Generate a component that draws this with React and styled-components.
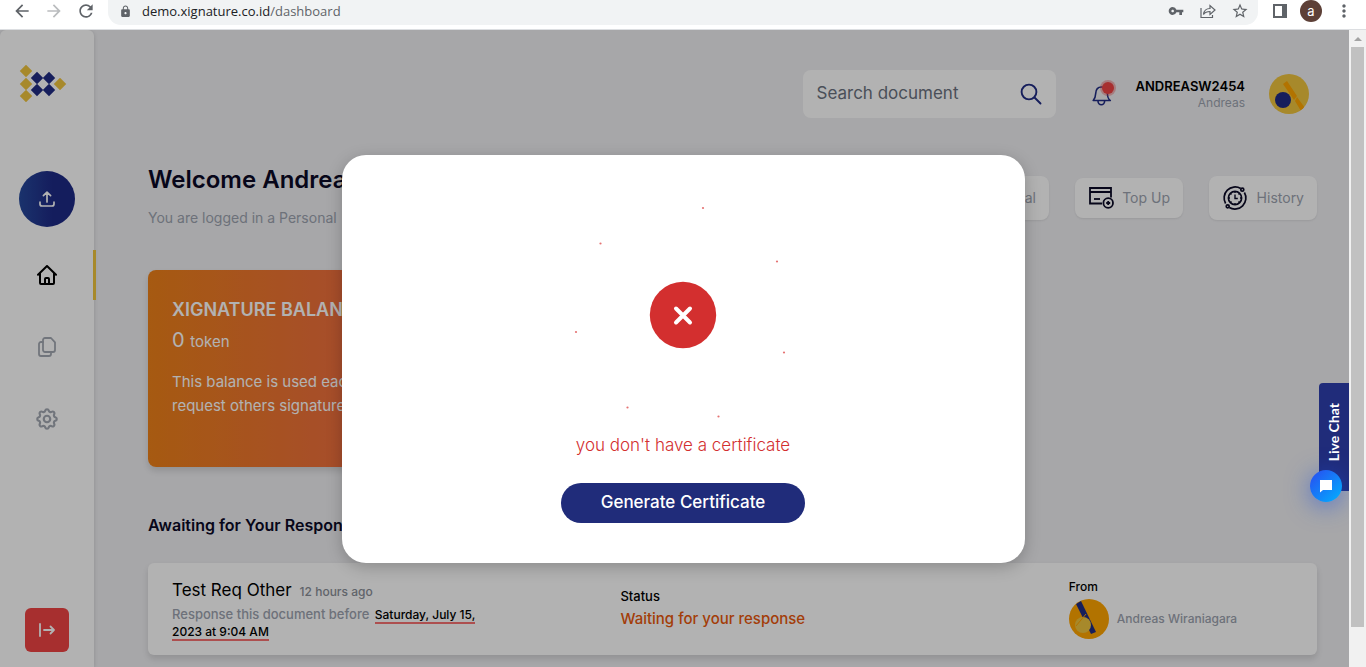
import React from 'react'

import styled, { createGlobalStyle, css } from 'styled-components'
import { MdArrowBack, MdArrowForward, MdRefresh, MdLock, MdVpnKey, MdStarBorder, MdMoreVert, MdPersonOutline } from 'react-icons/md'
import { HiOutlineCog } from 'react-icons/hi'

const GlobalStyle = createGlobalStyle`
    * {
        box-sizing: border-box;
    }
    body {
        margin: 0;
        overflow: hidden;
        font-family: Inter, "Liberation Sans", sans-serif;
        color: #0b0a26;
    }
    button {
        font-family: inherit;
        border: none;
        padding: 0;
        background: none;
        cursor: pointer;
    }
    h1, h2, h3, p {
        margin: 0;
    }
    svg {
        display: block;
    }
`;

const Window = styled.div`
    position: relative;
    height: 100vh;
    display: flex;
    flex-direction: column;
`;

/* browser bar */

const Browser = styled.div`
    height: 30px;
    flex: none;
    display: flex;
    align-items: flex-start;
    padding-left: 12px;
    background-color: #fff;
    border-bottom: 1px solid #dcdee1;
    color: #5f6368;
`;

const NavButton = styled.button`
    width: 32px;
    height: 22px;
    display: flex;
    align-items: center;
    color: ${props => props.$off ? '#babcbe' : '#5f6368'};
`;

const Address = styled.div`
    flex: 1;
    height: 25px;
    display: flex;
    align-items: center;
    gap: 10px;
    padding: 0 7px 3px 11px;
    background-color: #f1f3f4;
    border-radius: 0 0 13px 13px;
`;

const Url = styled.div`
    flex: 1;
    font-family: "Open Sans", "Noto Sans", sans-serif;
    font-size: 13px;
    line-height: 20px;
    color: #202124;
    span {
        color: #5f6368;
    }
`;

const AddressButton = styled.button`
    width: 22px;
    display: flex;
    justify-content: center;
    color: #5f6368;
`;

const BrowserTools = styled.div`
    height: 22px;
    display: flex;
    align-items: center;
    gap: 12px;
    padding: 0 12px 0 14px;
`;

const Profile = styled.button`
    width: 22px;
    height: 22px;
    border-radius: 50%;
    background-color: #5d4037;
    color: #fff;
    font-size: 13px;
    line-height: 20px;
`;

/* page */

const Viewport = styled.div`
    flex: 1;
    min-height: 0;
    display: flex;
`;

const Page = styled.div`
    position: relative;
    flex: 1;
    min-width: 0;
    display: flex;
    overflow: hidden;
    background-color: #efeff2;
`;

const Sidebar = styled.nav`
    width: 94px;
    flex: none;
    display: flex;
    flex-direction: column;
    align-items: center;
    padding: 35px 0 15px;
    background-color: #fff;
    border-radius: 6px 6px 0 0;
    box-shadow: 0 1px 4px rgba(0,0,0,.15);
`;

const Upload = styled.button`
    width: 56px;
    height: 56px;
    margin: 69px 0 23px;
    display: flex;
    align-items: center;
    justify-content: center;
    border-radius: 50%;
    background: linear-gradient(90deg, #26499c, #1e2a86 60%);
    color: #fff;
`;

const Menu = styled.div`
    width: 100%;
    display: flex;
    flex-direction: column;
    gap: 22px;
`;

const MenuItem = styled.a`
    height: 50px;
    display: flex;
    align-items: center;
    justify-content: center;
    color: ${props => props.$active ? '#000' : '#a3a8b2'};
    ${props => props.$active && css`
        position: relative;
        &::after {
            content: '';
            position: absolute;
            top: 0;
            right: -2px;
            width: 3px;
            height: 100%;
            background-color: #f0c43e;
        }
    `}
`;

const Logout = styled.button`
    width: 44px;
    height: 44px;
    margin-top: auto;
    display: flex;
    align-items: center;
    justify-content: center;
    border-radius: 6px;
    background-color: #ef4444;
    color: #fff;
`;

const Main = styled.main`
    flex: 1;
    min-width: 0;
    padding: 40px 32px 0 54px;
`;

const Header = styled.header`
    display: flex;
    justify-content: flex-end;
    align-items: center;
    padding-right: 8px;
`;

const Search = styled.label`
    width: 253px;
    height: 48px;
    display: flex;
    align-items: center;
    padding: 0 14px;
    background-color: #fff;
    border-radius: 8px;
`;

const SearchInput = styled.input`
    flex: 1;
    min-width: 0;
    border: none;
    outline: none;
    padding: 0 0 2px;
    background: transparent;
    font-family: inherit;
    font-size: 17px;
    line-height: 24px;
    &::placeholder {
        color: #6b7280;
        opacity: 1;
    }
`;

const Bell = styled.button`
    margin: 0 18px 0 34px;
`;

const User = styled.div`
    text-align: right;
    font-size: 13px;
    font-weight: 600;
    line-height: 18px;
    color: #000;
`;

const UserName = styled.div`
    font-size: 12px;
    font-weight: 400;
    line-height: 16px;
    color: #9ca3af;
`;

const Avatar = styled.svg`
    width: 40px;
    height: 40px;
    flex: none;
    border-radius: 50%;
    margin-left: ${props => props.$gap || 0};
`;

const Intro = styled.div`
    display: flex;
    justify-content: space-between;
    align-items: center;
    margin-top: 44px;
    height: 72px;
`;

const Greeting = styled.div`
    align-self: flex-start;
`;

const Title = styled.h1`
    font-size: 24px;
    font-weight: 600;
    line-height: 36px;
`;

const Subtitle = styled.p`
    margin-top: 10px;
    font-size: 14px;
    line-height: 20px;
    color: #9ca3af;
`;

const Actions = styled.div`
    display: flex;
    align-items: center;
    gap: 26px;
`;

const Action = styled.button`
    min-width: 108px;
    height: ${props => props.$tall ? 44 : 40}px;
    display: flex;
    align-items: center;
    justify-content: space-between;
    gap: 8px;
    padding: 0 13px;
    border-radius: 8px;
    background-color: #fff;
    box-shadow: 0 1px 2px rgba(0,0,0,.08);
    color: #9ca3af;
    font-size: 14px;
    line-height: 20px;
    svg {
        color: #0b0a26;
    }
`;

const Balance = styled.section`
    width: 480px;
    height: 197px;
    margin-top: 36px;
    padding: 24px;
    border-radius: 8px;
    background: linear-gradient(90deg, #ee8119, #f06b47 50%, #ef4444);
    box-shadow: 0 4px 6px rgba(0,0,0,.12);
    color: #fff;
    p {
        margin-top: 14px;
        max-width: 270px;
        font-size: 15px;
        line-height: 24px;
    }
`;

const BalanceTitle = styled.h2`
    font-size: 18px;
    font-weight: 600;
    line-height: 32px;
`;

const Amount = styled.div`
    font-size: 20px;
    line-height: 28px;
    span {
        font-size: 15px;
    }
`;

const SectionTitle = styled.h3`
    margin: 46px 0 26px;
    font-size: 16px;
    font-weight: 600;
    line-height: 24px;
`;

const Request = styled.article`
    display: grid;
    grid-template-columns: 2fr 2fr 1fr;
    align-items: center;
    height: 92px;
    padding: 0 24px;
    border-radius: 6px;
    background-color: #fff;
    box-shadow: 0 4px 6px rgba(0,0,0,.12);
    font-size: 12px;
    font-weight: 500;
    line-height: 16px;
    color: #000;
`;

const Doc = styled.div`
    max-width: 320px;
    font-size: 13px;
    color: #9ca3af;
    a {
        font-size: 12px;
        color: #000;
        text-decoration: none;
        border-bottom: 2px solid #f87171;
        margin-left: 2px;
    }
`;

const DocTitle = styled.div`
    margin-bottom: 2px;
    font-size: 12px;
    line-height: 24px;
    color: #8a8f98;
    strong {
        margin-right: 8px;
        font-size: 17px;
        font-weight: 400;
        color: #000;
    }
`;

const Status = styled.div`
    font-size: 13px;
    p {
        margin-top: 3px;
        font-size: 15px;
        font-weight: 500;
        line-height: 24px;
        color: #ea580c;
    }
`;

const Sender = styled.div`
    display: flex;
    align-items: center;
    gap: 8px;
    margin-top: 4px;
    color: #9ca3af;
    white-space: nowrap;
`;

/* scroll bar */

const Scrollbar = styled.div`
    width: 17px;
    flex: none;
    display: flex;
    flex-direction: column;
    align-items: center;
    background-color: #f1f1f1;
`;

const ScrollArrow = styled.div`
    margin: 7px 0 6px;
    border: 4px solid transparent;
    border-top: none;
    border-bottom-color: #a3a3a3;
`;

const ScrollThumb = styled.div`
    width: 13px;
    height: 91%;
    background-color: #c1c1c1;
`;

/* over the page */

const Shade = styled.div`
    position: absolute;
    inset: 0;
    background-color: rgba(0,0,0,.3);
`;

const LiveChat = styled.button`
    position: absolute;
    right: 0;
    top: 353px;
    width: 30px;
    height: 108px;
    padding: 0 2px 10px 0;
    border-radius: 4px 0 0 4px;
    background-color: #202c7a;
    color: #fff;
    font-family: Lato, sans-serif;
    font-size: 14px;
    font-weight: 700;
    span {
        display: block;
        margin: 0 auto;
        writing-mode: vertical-rl;
        transform: rotate(180deg);
    }
`;

const ChatBubble = styled.button`
    position: absolute;
    right: 7px;
    top: 440px;
    width: 32px;
    height: 32px;
    display: flex;
    align-items: center;
    justify-content: center;
    border-radius: 50%;
    background: linear-gradient(135deg, #2a4af0, #00b2ff);
    box-shadow: 0 4px 24px rgba(30,80,220,.6);
    color: #fff;
`;

const ModalLayer = styled.div`
    position: absolute;
    inset: 155px 0 auto;
    display: flex;
    justify-content: center;
    pointer-events: none;
`;

const Modal = styled.div`
    width: 50%;
    display: flex;
    flex-direction: column;
    align-items: center;
    padding: 40px;
    border-radius: 24px;
    background-color: #fff;
    box-shadow: 0 4px 16px rgba(0,0,0,.22);
    pointer-events: auto;
`;

const Message = styled.p`
    margin-bottom: 28px;
    font-size: 17px;
    font-weight: 300;
    line-height: 20px;
    color: #d32f2f;
`;

const Generate = styled.button`
    height: 40px;
    padding: 0 40px 2px;
    border-radius: 20px;
    background-color: #202c7a;
    color: #fff;
    font-size: 17px;
    font-weight: 500;
    line-height: 24px;
`;

const yellow = [[7, 6], [7, 19], [7, 31], [41, 19]]
const navy = [[18, 13], [30, 13], [18, 25], [30, 25]]
const diamond = ([x, y]) => `M${x} ${y - 6.2}l6.2 6.2-6.2 6.2-6.2-6.2z`

const Logo = () => (
    <svg width="56" height="37" viewBox="0 0 56 37">
        <path fill="#f0c43e" d={yellow.map(diamond).join('')} />
        <path fill="#202c84" d={navy.map(diamond).join('')} />
    </svg>
)

const Line = ({ size = 20, box = size, width = 2, children }) => (
    <svg width={size} height={size} viewBox={`0 0 ${box} ${box}`} fill="none" stroke="currentColor"
        strokeWidth={width} strokeLinecap="round" strokeLinejoin="round">
        {children}
    </svg>
)

const UploadIcon = () => (
    <Line size={16} width={1.7}>
        <path d="M8 11V1.2M4.4 4.6L8 1.2l3.6 3.4M1 11.2v1.8a2 2 0 0 0 2 2h10a2 2 0 0 0 2-2v-1.8" />
    </Line>
)

const HomeIcon = () => (
    <Line>
        <path d="M1 9.8L10 1l9 8.8M3 8.3V18a1 1 0 0 0 1 1h12a1 1 0 0 0 1-1V8.3" />
        <path d="M8 18.5V14a1 1 0 0 1 1-1h2a1 1 0 0 1 1 1v4.5" />
    </Line>
)

const CopyIcon = () => (
    <Line width={1.8}>
        <path d="M8 1h6l4 4.4V13a2 2 0 0 1-2 2H8a2 2 0 0 1-2-2V3a2 2 0 0 1 2-2z" />
        <path d="M6 5H4a2 2 0 0 0-2 2v10a2 2 0 0 0 2 2h8a2 2 0 0 0 2-2v-2" />
    </Line>
)

const LogoutIcon = () => (
    <Line size={18} width={1.8}>
        <path d="M2 3v12M6 9h10M12.5 5.5L16 9l-3.5 3.5" />
    </Line>
)

const SearchIcon = () => (
    <svg width="22" height="22" viewBox="0 0 22 22" fill="none" stroke="#202c84" strokeWidth="1.9" strokeLinecap="round">
        <circle cx="9" cy="9" r="7.4" />
        <path d="M14.5 14.5l6 6" />
    </svg>
)

const BellIcon = () => (
    <svg width="28" height="28" viewBox="0 0 28 28" fill="none" stroke="#202c84" strokeWidth="1.6" strokeLinejoin="round">
        <path d="M3.2 20.5c2-2 2.3-3 2.5-7 .2-4.5 2.5-6.500 5.800-6.500s5.700 2 5.900 6.500c.2 4 .5 5 2.900 7z" />
        <path d="M8 21a3.200 3.600 0 0 0 6.600 0" />
        <circle cx="18" cy="8" r="8" fill="#ef4444" fillOpacity=".35" stroke="none" />
        <circle cx="18" cy="8" r="6" fill="#ef4444" stroke="none" />
    </svg>
)

const TopUpIcon = () => (
    <svg width="26" height="22" viewBox="0 0 26 22" fill="none" stroke="currentColor" strokeWidth="1.8">
        <path d="M14 16.500H2V1h21v9.500M2 5h21" />
        <path d="M6 12h6" />
        <circle cx="20.200" cy="16" r="4.800" />
        <path d="M20.200 14v4M18.200 16h4" />
    </svg>
)

const HistoryIcon = () => (
    <svg width="26" height="26" viewBox="0 0 26 26" fill="none" stroke="currentColor" strokeWidth="1.700">
        <path d="M18.700 3.500A11 11 0 0 0 3.600 18.500M7.300 22.500A11 11 0 0 0 22.400 7.500" />
        <circle cx="20.300" cy="4.700" r="1.500" />
        <circle cx="5.700" cy="21.300" r="1.500" />
        <circle cx="13" cy="13" r="6.600" />
        <path d="M13 9.500v4h2.800M13 6.500v1.500M13 18v1.500M6.500 13H8M18 13h1.500M8.500 8.500l1 1M17.500 8.500l-1 1M8.500 17.500l1-1M17.500 17.500l-1-1" strokeWidth="1.400" />
    </svg>
)

const sparks = [[140, 13], [37.5, 48.5], [214, 66.5], [13, 137], [221, 157.5], [64.5, 212.5], [155.5, 221.5]]

const ErrorIcon = () => (
    <svg width="240" height="240" viewBox="0 0 240 240">
        {sparks.map(([x, y]) => <circle key={x} cx={x} cy={y} r="1.1" fill="#e57373" />)}
        <circle cx="120" cy="120" r="33.200" fill="#d32f2f" />
        <path d="M113 113.500l14 14M127 113.500l-14 14" stroke="#fff" strokeWidth="4" strokeLinecap="round" />
    </svg>
)

export default function App() {
    return (
        <Window>
            <GlobalStyle />
            <Browser>
                <NavButton aria-label="Back"><MdArrowBack size={20} /></NavButton>
                <NavButton aria-label="Forward" $off><MdArrowForward size={20} /></NavButton>
                <NavButton aria-label="Reload"><MdRefresh size={20} /></NavButton>
                <Address>
                    <MdLock size={13} />
                    <Url>demo.xignature.co.id<span>/dashboard</span></Url>
                    <AddressButton aria-label="Passwords"><MdVpnKey size={16} /></AddressButton>
                    <AddressButton aria-label="Share">
                        <svg width="16" height="16" viewBox="0 0 16 16" fill="none" stroke="currentColor" strokeWidth="1.200">
                            <path d="M1 5v9.500h11.500V12M3.500 11.500c.5-4 3-6 6.500-6V2.500l5 4.500-5 4.500v-3c-3 0-5 .8-6.500 3z" />
                        </svg>
                    </AddressButton>
                    <AddressButton aria-label="Bookmark"><MdStarBorder size={18} /></AddressButton>
                </Address>
                <BrowserTools>
                    <svg width="16" height="14" viewBox="0 0 16 14">
                        <path d="M2 1h12v12H2z" fill="#fff" stroke="#5f6368" strokeWidth="2" />
                        <path d="M10 1h4v12h-4z" fill="#5f6368" />
                    </svg>
                    <Profile>a</Profile>
                    <MdMoreVert size={20} />
                </BrowserTools>
            </Browser>
            <Viewport>
                <Page>
                    <Sidebar>
                        <Logo />
                        <Upload aria-label="Upload"><UploadIcon /></Upload>
                        <Menu>
                            <MenuItem href="#home" aria-label="Home" $active><HomeIcon /></MenuItem>
                            <MenuItem href="#documents" aria-label="Documents"><CopyIcon /></MenuItem>
                            <MenuItem href="#settings" aria-label="Settings"><HiOutlineCog size={26} /></MenuItem>
                        </Menu>
                        <Logout aria-label="Log out"><LogoutIcon /></Logout>
                    </Sidebar>
                    <Main>
                        <Header>
                            <Search>
                                <SearchInput placeholder="Search document" aria-label="Search document" />
                                <SearchIcon />
                            </Search>
                            <Bell aria-label="Notifications"><BellIcon /></Bell>
                            <User>
                                ANDREASW2454
                                <UserName>Andreas</UserName>
                            </User>
                            <Avatar viewBox="0 0 40 40" $gap="24px">
                                <path fill="#f0c43e" d="M0 0h40v40H0z" />
                                <path fill="#ffa500" d="M14 10l4-3 10 15-3 4zM28 23l8 11-4 3-6-10z" />
                                <circle cx="14" cy="26" r="8" fill="#202c84" />
                            </Avatar>
                        </Header>
                        <Intro>
                            <Greeting>
                                <Title>Welcome Andreas</Title>
                                <Subtitle>You are logged in a Personal</Subtitle>
                            </Greeting>
                            <Actions>
                                <Action $tall><MdPersonOutline size={26} />Personal</Action>
                                <Action><TopUpIcon />Top Up</Action>
                                <Action $tall><HistoryIcon />History</Action>
                            </Actions>
                        </Intro>
                        <Balance>
                            <BalanceTitle>XIGNATURE BALANCE</BalanceTitle>
                            <Amount>0 <span>token</span></Amount>
                            <p>This balance is used each time you request others signature</p>
                        </Balance>
                        <SectionTitle>Awaiting for Your Response</SectionTitle>
                        <Request>
                            <Doc>
                                <DocTitle><strong>Test Req Other</strong>12 hours ago</DocTitle>
                                Response this document before <a href="#deadline">Saturday, July 15, 2023 at 9:04 AM</a>
                            </Doc>
                            <Status>
                                Status
                                <p>Waiting for your response</p>
                            </Status>
                            <div>
                                From
                                <Sender>
                                    <Avatar viewBox="0 0 40 40">
                                        <path fill="#ffa500" d="M0 0h40v40H0z" />
                                        <path fill="#202c84" d="M7 5l5-3 15 31-5 2z" />
                                        <circle cx="14" cy="26" r="8" fill="#f0c43e" />
                                        <path d="M7 27l10-12" stroke="#ffa500" fill="none" />
                                    </Avatar>
                                    Andreas Wiraniagara
                                </Sender>
                            </div>
                        </Request>
                    </Main>
                    <Shade />
                    <LiveChat><span>Live Chat</span></LiveChat>
                    <ChatBubble aria-label="Open chat">
                        <svg width="14" height="14" viewBox="0 0 14 14">
                            <path fill="currentColor" d="M1 1h12v10H4l-3 2.500z" />
                        </svg>
                    </ChatBubble>
                </Page>
                <Scrollbar>
                    <ScrollArrow />
                    <ScrollThumb />
                </Scrollbar>
            </Viewport>
            <ModalLayer>
                <Modal role="dialog">
                    <ErrorIcon />
                    <Message>you don't have a certificate</Message>
                    <Generate>Generate Certificate</Generate>
                </Modal>
            </ModalLayer>
        </Window>
    )
}
